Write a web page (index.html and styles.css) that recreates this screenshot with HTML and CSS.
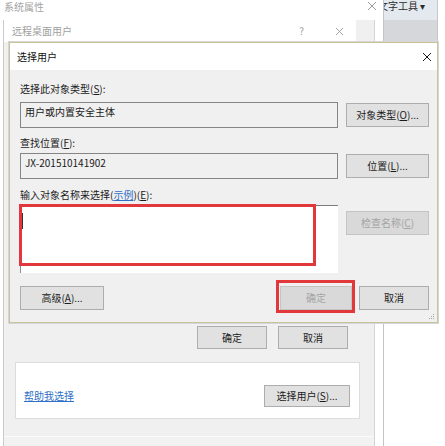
FILE: index.html
```html
<!DOCTYPE html>
<html lang="zh-CN">
<head>
<meta charset="utf-8">
<title>选择用户</title>
<link rel="stylesheet" href="styles.css">
</head>
<body>
  <!-- 系统属性 window, mostly covered -->
  <div class="win sys">
    <div class="sys-title">
      <span class="sys-name">系统属性</span>
      <svg class="xicon xicon-grey" viewBox="0 0 10 10" width="10" height="10"><path d="M1 1L9 9M9 1L1 9"/></svg>
    </div>
  </div>

  <!-- strip of the window behind, on the right -->
  <div class="win side">
    <div class="side-tab"><span class="side-text">文字工具 ▾</span></div>
    <div class="side-bar"></div>
  </div>

  <!-- 远程桌面用户 dialog -->
  <div class="win rdp">
    <div class="rdp-title">
      <div class="rdp-head">
        <span class="rdp-name">远程桌面用户</span>
        <span class="rdp-help">?</span>
        <svg class="xicon xicon-grey" viewBox="0 0 10 10" width="9" height="9"><path d="M1 1L9 9M9 1L1 9"/></svg>
      </div>
    </div>
    <div class="rdp-body">
      <div class="rdp-actions">
        <div class="btn btn-rdp">确定</div>
        <div class="btn btn-rdp">取消</div>
      </div>
      <div class="rdp-panel">
        <a class="link" href="#">帮助我选择</a>
        <div class="btn btn-pick">选择用户(<u>S</u>)...</div>
      </div>
    </div>
    <div class="rdp-foot"></div>
  </div>

  <!-- 选择用户 dialog -->
  <div class="win sel">
    <div class="sel-title">
      <span class="sel-name">选择用户</span>
      <svg class="xicon" viewBox="0 0 10 10" width="10" height="10"><path d="M1 1L9 9M9 1L1 9"/></svg>
    </div>
    <div class="sel-body">
      <div class="form">
        <div class="label label-first">选择此对象类型(<u>S</u>):</div>
        <div class="field">用户或内置安全主体</div>
        <div class="btn btn-side">对象类型(<u>O</u>)...</div>

        <div class="label label-mid">查找位置(<u>F</u>):</div>
        <div class="field">JX-201510141902</div>
        <div class="btn btn-side">位置(<u>L</u>)...</div>

        <div class="label label-last">输入对象名称来选择(<a class="link" href="#">示例</a>)(<u>E</u>):</div>
        <div class="names"><span class="caret"></span></div>
        <div class="btn btn-side btn-off btn-check">检查名称(<u>C</u>)</div>

        <div class="sel-actions">
          <div class="btn btn-adv">高级(<u>A</u>)...</div>
          <div class="btn btn-off btn-ok">确定</div>
          <div class="btn btn-cancel">取消</div>
        </div>
      </div>
      <svg class="grip" viewBox="0 0 7 7" width="7" height="7">
        <rect x="5" y="1" width="1" height="1"/>
        <rect x="3" y="3" width="1" height="1"/><rect x="5" y="3" width="1" height="1"/>
        <rect x="1" y="5" width="1" height="1"/><rect x="3" y="5" width="1" height="1"/><rect x="5" y="5" width="1" height="1"/>
      </svg>
    </div>
  </div>

  <!-- red annotation frames -->
  <div class="mark mark-names"></div>
  <div class="mark mark-ok"></div>
</body>
</html>
```
FILE: styles.css
```css
* { box-sizing: border-box; }

body {
  margin: 0;
  width: 445px;
  height: 446px;
  overflow: hidden;
  position: relative;
  background: #fff;
  font: 10px/14px "Noto Sans CJK SC", "Noto Sans", sans-serif;
  color: #1b1b1b;
}

u { text-decoration: underline; text-underline-offset: 1px; }

.win { position: absolute; }

.xicon { display: block; fill: none; stroke: #1a1a1a; stroke-width: 1; }
.xicon-grey { stroke: #9a9a9a; }

/* 系统属性 */
.sys {
  left: 0;
  top: 0;
  width: 384px;
  height: 446px;
  border-right: 1px solid #c4c4c4;
  background: #fff;
}
.sys-title {
  height: 20px;
  display: flex;
  align-items: flex-start;
  justify-content: space-between;
  padding: 0 6px 0 4px;
  color: #a3a3a3;
}
.sys-name { line-height: 13px; }
.sys-title .xicon { margin-top: 1px; }

/* right-hand strip */
.side {
  left: 384px;
  top: 0;
  width: 54px;
  border-right: 1px solid #c6c6c6;
}
.side-tab {
  height: 20px;
  background: #e4e9ef;
  overflow: hidden;
  white-space: nowrap;
}
.side-text {
  display: block;
  margin-left: -6px;
  line-height: 11px;
  color: #2a2a2a;
}
.side-bar { height: 22px; background: #d6d7da; }

/* 远程桌面用户 */
.rdp {
  left: 3px;
  top: 20px;
  width: 372px;
  height: 426px;
  border-left: 1px solid #cacaca;
  border-right: 1px solid #d4d4d4;
  display: flex;
  flex-direction: column;
  background: #f0f0f0;
}
.rdp-title { height: 22px; display: flex; background: #f0f0f0; }
.rdp-head {
  width: 352px;
  background: #fff;
  display: flex;
  align-items: center;
  padding: 0 12px 0 8px;
  color: #a0a0a0;
}
.rdp-help { margin-left: auto; margin-right: 31px; font-size: 10px; }
.rdp-body {
  height: 395px;
  display: flex;
  flex-direction: column;
  justify-content: flex-end;
  padding-bottom: 17px;
  border-bottom: 1px solid #fbfbfb;
}
.rdp-actions {
  display: flex;
  justify-content: flex-end;
  gap: 11px;
  padding-right: 26px;
  margin-bottom: 13px;
}
.rdp-panel {
  height: 57px;
  margin: 0 14px 0 11px;
  background: #fff;
  border: 1px solid #dcdcdc;
  display: flex;
  align-items: flex-end;
  justify-content: space-between;
  padding: 0 9px 11px 8px;
}
.rdp-panel .link { line-height: 22px; }
.rdp-foot { flex: 1; background: #f2f2f2; }

.link { color: #2f6fc6; text-decoration: underline; text-underline-offset: 1px; }

/* buttons */
.btn {
  display: flex;
  align-items: center;
  justify-content: center;
  background: #e1e1e1;
  border: 1px solid #adadad;
  color: #1b1b1b;
  white-space: nowrap;
}
.btn-rdp { width: 70px; height: 23px; }
.btn-pick { width: 86px; height: 22px; }
.btn-side { height: 24px; align-self: center; }
.btn-off { background: #d9d9d9; border-color: #c4c4c4; color: #a4a4a4; }
.btn-check { align-self: start; margin-top: 6px; }
.btn-adv { width: 84px; height: 24px; }
.btn-ok { width: 72px; height: 24px; margin-left: auto; }
.btn-cancel { width: 70px; height: 24px; margin-left: 7px; }

/* 选择用户 */
.sel {
  left: 9px;
  top: 42px;
  width: 429px;
  height: 281px;
  border: 1px solid #c9c39d;
  box-shadow: 0 0 0 1px #d6d6d6;
  display: flex;
  flex-direction: column;
  background: #f0f0f0;
}
.sel-title {
  height: 27px;
  flex: none;
  background: #fff;
  display: flex;
  align-items: center;
  justify-content: space-between;
  padding: 0 5px 0 7px;
  color: #111;
}
.sel-body {
  flex: 1;
  position: relative;
  padding: 12px 8px 0 10px;
}
.form {
  display: grid;
  grid-template-columns: 318px 83px;
  column-gap: 8px;
}
.label { grid-column: 1 / -1; height: 14px; }
.label-first { margin-bottom: 6px; }
.label-mid { margin-top: 8px; margin-bottom: 3px; }
.label-last { margin-top: 9px; margin-bottom: 3px; }

.field {
  height: 26px;
  border: 1px solid #858585;
  background: #f0f0f0;
  padding: 2px 4px 0;
}
.names {
  height: 68px;
  background: #fff;
  border-top: 1px solid #7c7c7c;
  border-left: 1px solid #8e8e8e;
}
.caret {
  display: block;
  width: 1px;
  height: 16px;
  margin: 7px 0 0 1px;
  background: #333;
}
.sel-actions {
  grid-column: 1 / -1;
  display: flex;
  margin-top: 13px;
}
.grip { position: absolute; right: 2px; bottom: 2px; fill: #a8a8a8; }

/* red annotation frames */
.mark { position: absolute; border: 3px solid #e2383b; }
.mark-names { left: 19px; top: 204px; width: 297px; height: 62px; }
.mark-ok { left: 276px; top: 280px; width: 79px; height: 33px; }
```
